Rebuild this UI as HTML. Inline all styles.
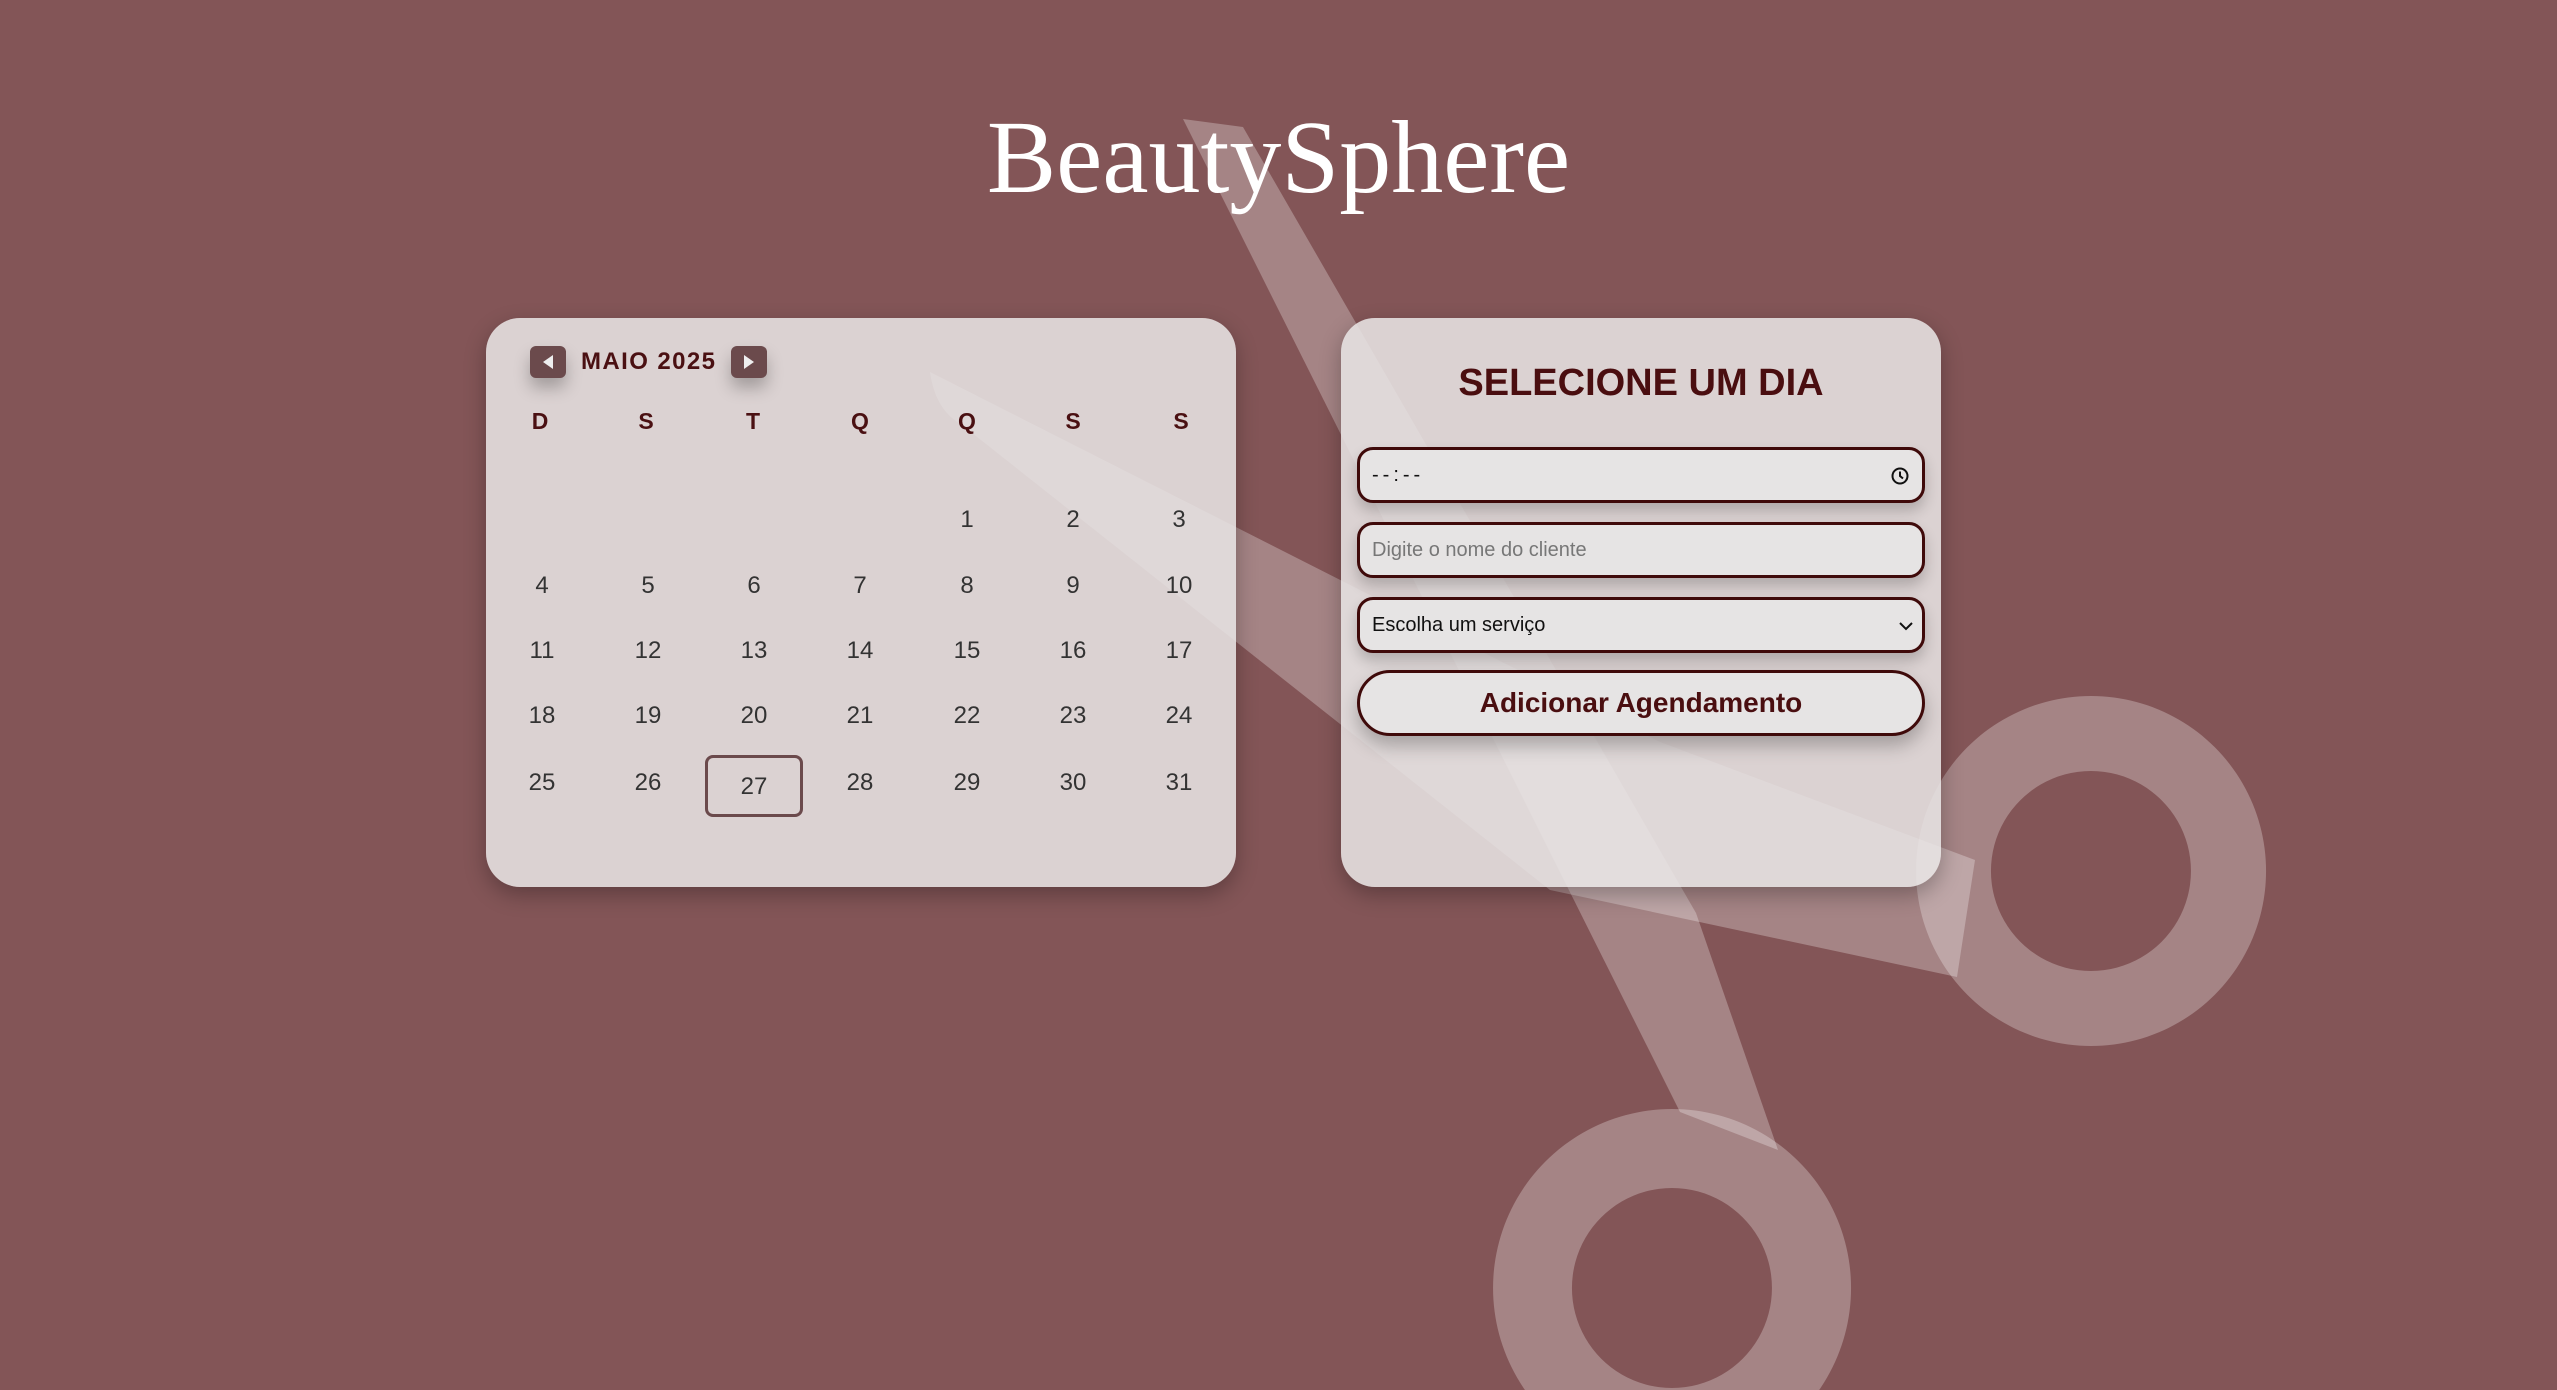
<!DOCTYPE html>
<html style="overflow:hidden"><head><meta charset="utf-8"><style>
*{box-sizing:border-box;margin:0;padding:0}
html,body{width:2557px;height:1390px;overflow:hidden}
body{background:#835557;position:relative;font-family:"Liberation Sans",sans-serif}
svg.bg{position:absolute;left:0;top:0}
h1{position:absolute;left:0;width:2557px;top:88px;text-align:center;font-family:"Liberation Serif",serif;font-weight:normal;font-size:104px;color:#fff;line-height:140px}
.card{position:absolute;top:318px;height:569px;border-radius:34px;background:rgba(232,229,229,0.87);box-shadow:0 8px 22px rgba(0,0,0,0.28)}
.btn{position:absolute;width:36px;height:32px;top:346px;background:#6b4a4c;border-radius:6px;box-shadow:0 10px 16px rgba(0,0,0,0.25)}
.hd{position:absolute;top:346px;left:581px;line-height:32px;font-size:24px;font-weight:bold;color:#4a1012;letter-spacing:1.4px}
.c{position:absolute;width:100px;margin-left:-50px;text-align:center}
.wd{font-weight:bold;font-size:23px;color:#4a1012;top:408px}
.d{font-size:24px;color:#333}
.f{position:absolute;left:1357px;width:568px;height:56px;border:3px solid #3f0a0a;border-radius:16px;background:#e6e4e4;box-shadow:0 8px 14px rgba(0,0,0,0.2);font-size:20px;line-height:50px;padding-left:12px}
</style></head><body>
<svg class="bg" width="2557" height="1390" viewBox="0 0 2557 1390">
<g fill="rgba(255,255,255,0.28)">
<path d="M1183 119 L1243 127 L1696 913 L1778 1150 L1680 1112 Z"/>
<path d="M930 372 Q935 410 962 425 L1550 890 L1957 977 L1975 860 L1660 742 Z"/>
<path fill-rule="evenodd" d="M2091 696 a175 175 0 1 0 0.1 0 Z M2091 771 a100 100 0 1 1 -0.1 0 Z"/>
<path fill-rule="evenodd" d="M1672 1109 a179 179 0 1 0 0.1 0 Z M1672 1188 a100 100 0 1 1 -0.1 0 Z"/>
</g></svg>
<h1>BeautySphere</h1>
<div class="card" style="left:486px;width:750px"></div>
<div class="card" style="left:1341px;width:600px"></div>
<div class="btn" style="left:530px"><svg width="36" height="32"><path d="M23 9 L13 16 L23 23Z" fill="#eee"/></svg></div>
<div class="hd">MAIO 2025</div>
<div class="btn" style="left:731px"><svg width="36" height="32"><path d="M13 9 L23 16 L13 23Z" fill="#eee"/></svg></div>
<div class="c wd" style="left:540px">D</div><div class="c wd" style="left:646px">S</div><div class="c wd" style="left:753px">T</div><div class="c wd" style="left:860px">Q</div><div class="c wd" style="left:967px">Q</div><div class="c wd" style="left:1073px">S</div><div class="c wd" style="left:1181px">S</div>
<div class="c d" style="left:967px;top:506px">1</div><div class="c d" style="left:1073px;top:506px">2</div><div class="c d" style="left:1179px;top:506px">3</div>
<div class="c d" style="left:542px;top:572px">4</div><div class="c d" style="left:648px;top:572px">5</div><div class="c d" style="left:754px;top:572px">6</div><div class="c d" style="left:860px;top:572px">7</div><div class="c d" style="left:967px;top:572px">8</div><div class="c d" style="left:1073px;top:572px">9</div><div class="c d" style="left:1179px;top:572px">10</div>
<div class="c d" style="left:542px;top:637px">11</div><div class="c d" style="left:648px;top:637px">12</div><div class="c d" style="left:754px;top:637px">13</div><div class="c d" style="left:860px;top:637px">14</div><div class="c d" style="left:967px;top:637px">15</div><div class="c d" style="left:1073px;top:637px">16</div><div class="c d" style="left:1179px;top:637px">17</div>
<div class="c d" style="left:542px;top:702px">18</div><div class="c d" style="left:648px;top:702px">19</div><div class="c d" style="left:754px;top:702px">20</div><div class="c d" style="left:860px;top:702px">21</div><div class="c d" style="left:967px;top:702px">22</div><div class="c d" style="left:1073px;top:702px">23</div><div class="c d" style="left:1179px;top:702px">24</div>
<div class="c d" style="left:542px;top:769px">25</div><div class="c d" style="left:648px;top:769px">26</div><div class="c d" style="left:860px;top:769px">28</div><div class="c d" style="left:967px;top:769px">29</div><div class="c d" style="left:1073px;top:769px">30</div><div class="c d" style="left:1179px;top:769px">31</div>
<div style="position:absolute;left:705px;top:755px;width:98px;height:62px;border:3px solid #6b4a4c;border-radius:8px;text-align:center;line-height:58px;font-size:24px;color:#333">27</div>
<div style="position:absolute;left:1341px;width:600px;top:362px;text-align:center;font-size:38px;font-weight:bold;color:#4a0e10">SELECIONE UM DIA</div>
<div class="f" style="top:447px;color:#111;letter-spacing:4px">--:--<svg style="position:absolute;right:12px;top:16px" width="20" height="20" viewBox="0 0 20 20"><circle cx="10" cy="10" r="7.5" fill="none" stroke="#111" stroke-width="2"/><path d="M10 5.5V10L13 12.5" fill="none" stroke="#111" stroke-width="2"/></svg></div>
<div class="f" style="top:522px;color:#777">Digite o nome do cliente</div>
<div class="f" style="top:597px;color:#111">Escolha um serviço<svg style="position:absolute;right:8px;top:20px" width="16" height="12"><path d="M2 3L8 9L14 3" fill="none" stroke="#111" stroke-width="2"/></svg></div>
<div class="f" style="top:670px;height:66px;border-radius:33px;text-align:center;padding:0;line-height:60px;font-size:28px;font-weight:bold;color:#4a0e10;box-shadow:0 10px 18px rgba(0,0,0,0.25)">Adicionar Agendamento</div>
</body></html>
